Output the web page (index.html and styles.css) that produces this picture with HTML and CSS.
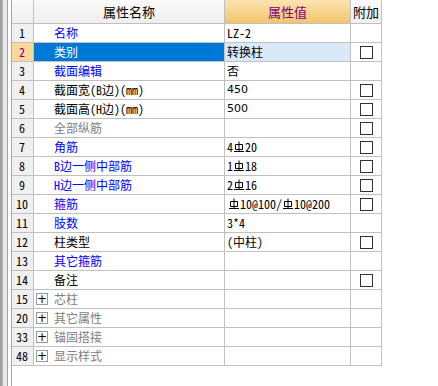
FILE: index.html
```html
<!DOCTYPE html>
<html>
<head>
<meta charset="utf-8">
<link rel="stylesheet" href="styles.css">
</head>
<body>
<div class="app">
  <div class="side"><div class="side-bar"></div><div class="side-gap"></div></div>
  <div class="grid">
    <div class="row head">
      <div class="c num"></div>
      <div class="c name hcenter">属性名称</div>
      <div class="c val hval">属性值</div>
      <div class="c extra hcenter">附加</div>
    </div>
    <div class="row"><div class="c num">1</div><div class="c name blue">名称</div><div class="c val">LZ-2</div><div class="c extra"></div></div>
    <div class="row sel"><div class="c num">2</div><div class="c name">类别</div><div class="c val">转换柱</div><div class="c extra"><span class="cb"></span></div></div>
    <div class="row"><div class="c num">3</div><div class="c name blue">截面编辑</div><div class="c val">否</div><div class="c extra"></div></div>
    <div class="row"><div class="c num">4</div><div class="c name">截面宽(B边)(mm)</div><div class="c val latin">450</div><div class="c extra"><span class="cb"></span></div></div>
    <div class="row"><div class="c num">5</div><div class="c name">截面高(H边)(mm)</div><div class="c val latin">500</div><div class="c extra"><span class="cb"></span></div></div>
    <div class="row"><div class="c num">6</div><div class="c name gray">全部纵筋</div><div class="c val"></div><div class="c extra"><span class="cb"></span></div></div>
    <div class="row"><div class="c num">7</div><div class="c name blue">角筋</div><div class="c val">4<svg class="rb" viewBox="0 0 12 12"><path d="M2.5 3.5h7v5h-7z M6 0.5v9.5 M1 10.5h10"/></svg>20</div><div class="c extra"><span class="cb"></span></div></div>
    <div class="row"><div class="c num">8</div><div class="c name blue">B边一侧中部筋</div><div class="c val">1<svg class="rb" viewBox="0 0 12 12"><path d="M2.5 3.5h7v5h-7z M6 0.5v9.5 M1 10.5h10"/></svg>18</div><div class="c extra"><span class="cb"></span></div></div>
    <div class="row"><div class="c num">9</div><div class="c name blue">H边一侧中部筋</div><div class="c val">2<svg class="rb" viewBox="0 0 12 12"><path d="M2.5 3.5h7v5h-7z M6 0.5v9.5 M1 10.5h10"/></svg>16</div><div class="c extra"><span class="cb"></span></div></div>
    <div class="row"><div class="c num">10</div><div class="c name blue">箍筋</div><div class="c val"><svg class="rb first" viewBox="0 0 12 12"><path d="M2.5 3.5h7v5h-7z M6 0.5v9.5 M1 10.5h10"/></svg>10@100/<svg class="rb" viewBox="0 0 12 12"><path d="M2.5 3.5h7v5h-7z M6 0.5v9.5 M1 10.5h10"/></svg>10@200</div><div class="c extra"><span class="cb"></span></div></div>
    <div class="row"><div class="c num">11</div><div class="c name blue">肢数</div><div class="c val">3*4</div><div class="c extra"></div></div>
    <div class="row"><div class="c num">12</div><div class="c name">柱类型</div><div class="c val">(中柱)</div><div class="c extra"><span class="cb"></span></div></div>
    <div class="row"><div class="c num">13</div><div class="c name blue">其它箍筋</div><div class="c val"></div><div class="c extra"></div></div>
    <div class="row"><div class="c num">14</div><div class="c name">备注</div><div class="c val"></div><div class="c extra"><span class="cb"></span></div></div>
    <div class="row"><div class="c num">15</div><div class="c name gray grp"><span class="plus">+</span>芯柱</div><div class="c val"></div><div class="c extra"></div></div>
    <div class="row"><div class="c num">20</div><div class="c name gray grp"><span class="plus">+</span>其它属性</div><div class="c val"></div><div class="c extra"></div></div>
    <div class="row"><div class="c num">33</div><div class="c name gray grp"><span class="plus">+</span>锚固搭接</div><div class="c val"></div><div class="c extra"></div></div>
    <div class="row"><div class="c num">48</div><div class="c name gray grp"><span class="plus">+</span>显示样式</div><div class="c val"></div><div class="c extra"></div></div>
  </div>
</div>
</body>
</html>
```

FILE: styles.css
```css
* { box-sizing: border-box; }
html, body { margin: 0; padding: 0; background: #ffffff; }
body {
  font-family: "Noto Sans Mono CJK SC", "Noto Sans CJK SC", "Noto Sans", sans-serif;
  font-size: 12px;
  color: #000;
}
.app {
  display: flex;
  width: 438px;
  height: 386px;
  overflow: hidden;
}
.side {
  width: 12px;
  display: flex;
  border-right: 1px solid #a8a8a8;
  flex: none;
}
.side-bar {
  width: 8px;
  background: linear-gradient(to right, #9a9a9a 0, #b4b4b4 3px, #e6e6e6 3px, #ececec 7px, #a0a0a0 7px, #a0a0a0 8px);
}
.side-gap { flex: 1; background: #ffffff; }
.grid {
  display: flex;
  flex-direction: column;
  width: 370px;
  align-self: flex-start;
}
.row {
  display: grid;
  grid-template-columns: 22px 191px 126px 31px;
  height: 19px;
}
.row.head { height: 24px; }
.c {
  border-right: 1px solid #c0c0c0;
  border-bottom: 1px solid #c0c0c0;
  line-height: 18px;
  white-space: nowrap;
  overflow: hidden;
  display: flex;
  align-items: center;
}
.num {
  justify-content: center;
  background: #f0f0f0;
  color: #000;
  padding-right: 1px;
}
.name { padding-left: 20px; }
.val { padding-left: 2px; }
.extra { justify-content: center; }
.head .c {
  background: linear-gradient(#fafafa, #eeeeee);
  font-family: "Noto Sans CJK SC", sans-serif;
  font-size: 13px;
  line-height: 23px;
}
.head .hcenter { justify-content: center; padding-left: 0; }
.head .hval {
  background: linear-gradient(#fbe3b0, #f2c56c);
  color: #800080;
  justify-content: center;
  padding-left: 0;
}
.blue { color: #0000ff; }
.gray { color: #808080; }
.latin { font-family: "DejaVu Sans", sans-serif; font-size: 11px; }
.sel .num { background: #fdd89c; color: #800080; }
.sel .name { background: #0078d7; color: #ffffff; }
.sel .val { background: #d9e9f8; }
.cb {
  width: 13px;
  height: 13px;
  border: 1px solid #333333;
  background: #ffffff;
  margin-left: 1px;
}
.rb {
  width: 12px;
  height: 12px;
  margin: 0;
  fill: none;
  stroke: #000;
  stroke-width: 1;
}
.rb.first { margin-left: 1px; }
.grp { padding-left: 2px; }
.plus {
  width: 12px;
  height: 12px;
  border: 1px solid #9a9a9a;
  color: #000;
  display: flex;
  align-items: center;
  justify-content: center;
  font-family: "DejaVu Sans", sans-serif;
  font-size: 12px;
  line-height: 10px;
  margin-right: 6px;
}
```
